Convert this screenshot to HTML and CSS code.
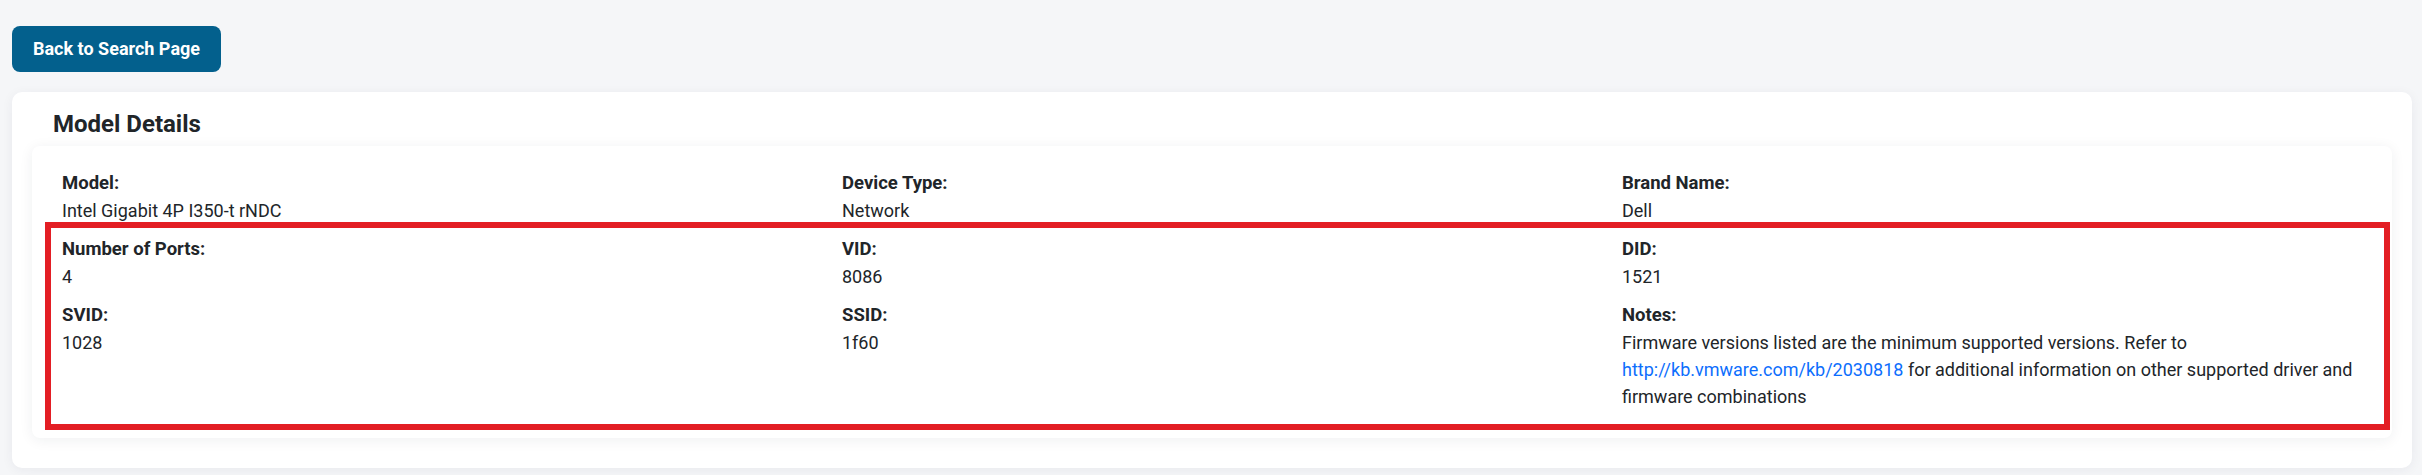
FILE: index.html
```html
<!DOCTYPE html>
<html lang="en">
<head>
  <meta charset="UTF-8" />
  <meta name="viewport" content="width=device-width, initial-scale=1.0"/>
  <title>Model Details</title>
  <link rel="stylesheet" href="styles.css">
</head>
<body>
  <div class="page">
    <button class="backBtn">Back to Search Page</button>

    <div class="detailsCard">
      <h2 class="cardTitle">Model Details</h2>
      <div class="innerCard">
        <div class="fields">
          <div class="field">
            <p class="label">Model:</p>
            <p>Intel Gigabit 4P I350-t rNDC</p>
          </div>
          <div class="field">
            <p class="label">Device Type:</p>
            <p>Network</p>
          </div>
          <div class="field">
            <p class="label">Brand Name:</p>
            <p>Dell</p>
          </div>
          <div class="field">
            <p class="label">Number of Ports:</p>
            <p>4</p>
          </div>
          <div class="field">
            <p class="label">VID:</p>
            <p>8086</p>
          </div>
          <div class="field">
            <p class="label">DID:</p>
            <p>1521</p>
          </div>
          <div class="field">
            <p class="label">SVID:</p>
            <p>1028</p>
          </div>
          <div class="field">
            <p class="label">SSID:</p>
            <p>1f60</p>
          </div>
          <div class="field">
            <p class="label">Notes:</p>
            <p>Firmware versions listed are the minimum supported versions. Refer to <a href="#">http://kb.vmware.com/kb/2030818</a> for additional information on other supported driver and firmware combinations</p>
          </div>
        </div>
        <div class="highlight"></div>
      </div>
    </div>
  </div>
</body>
</html>
```

FILE: styles.css
```css
* {
  margin: 0;
  padding: 0;
  box-sizing: border-box;
}

body {
  background: #f5f6f8;
  font-family: Roboto, "Liberation Sans", sans-serif;
  font-size: 18px;
  line-height: 27px;
  color: #212529;
}

.page {
  padding: 26px 10px 8px 12px;
}

.backBtn {
  display: block;
  font-family: inherit;
  font-size: 18px;
  font-weight: 700;
  line-height: 27px;
  color: #fff;
  background: #03608d;
  border: none;
  border-radius: 8px;
  padding: 9px 21px 10px;
  width: 209px;
  cursor: pointer;
}

.detailsCard {
  margin-top: 20px;
  background: #fff;
  border-radius: 10px;
  box-shadow: 0 2px 12px rgba(30, 40, 60, 0.06);
  padding: 18px 20px 30px;
}

.cardTitle {
  font-size: 24px;
  font-weight: 700;
  line-height: 29px;
  padding-left: 21px;
  margin-bottom: 7px;
}

.innerCard {
  position: relative;
  background: #fff;
  border-radius: 8px;
  box-shadow: 0 2px 14px rgba(30, 40, 60, 0.07);
  padding: 24px 10px 28px;
}

.fields {
  display: grid;
  grid-template-columns: repeat(3, 1fr);
  row-gap: 12px;
}

.field {
  padding: 0 20px;
}

.label {
  font-weight: 700;
  font-size: 18.5px;
}

.field a {
  color: #0d6efd;
  text-decoration: none;
}

.highlight {
  position: absolute;
  left: 13px;
  right: 2px;
  top: 76px;
  bottom: 8px;
  border: 6px solid #e31e24;
  pointer-events: none;
}
```
